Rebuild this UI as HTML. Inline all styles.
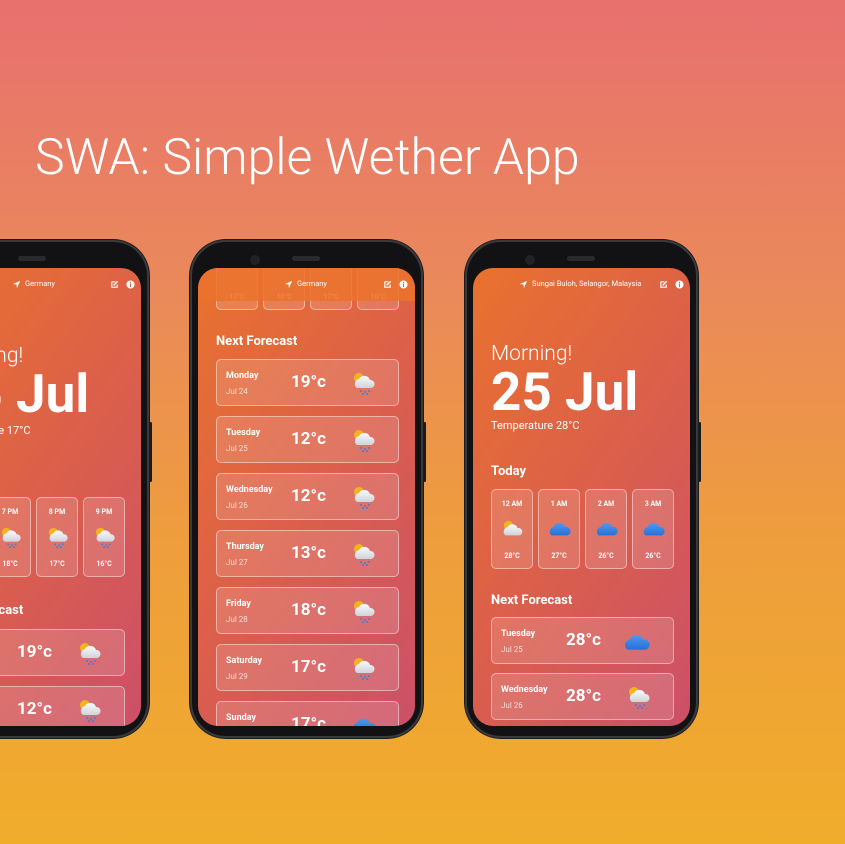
<!DOCTYPE html>
<html style="overflow:hidden"><head><meta charset="utf-8">
<style>
*{margin:0;padding:0;box-sizing:border-box}
body{width:845px;height:844px;overflow:hidden;position:relative;font-family:"Roboto","Liberation Sans",sans-serif;color:#fff;
background:linear-gradient(180deg,#e8706f 0%,#ea8a5a 35%,#ee9e3c 65%,#f0ad2b 100%);}
#wrap{position:absolute;left:0;top:0;width:845px;height:844px;overflow:hidden}
.title{position:absolute;left:35px;top:129px;font-size:50px;font-weight:300;color:#fff;white-space:nowrap}
.phone{position:absolute;top:240px;width:233px;height:498px;border-radius:36px;background:#121214;border:2px solid #3a3a3c;box-shadow:0 0 0 1px #1b1b1b}
.cam{position:absolute;top:13px;left:58px;width:10px;height:10px;border-radius:50%;background:#222}
.spk{position:absolute;top:14px;left:100px;width:28px;height:5px;border-radius:3px;background:#2a2a2c}
.btn{position:absolute;right:-5px;width:3px;background:#1a1a1a;border-radius:2px}
.screen{position:absolute;left:6px;top:26px;width:217px;height:458px;border-radius:20px;overflow:hidden;
background:linear-gradient(125deg,#e9722e 0%,#dd6147 45%,#cc5068 100%)}
.abs{position:absolute;white-space:nowrap}
.hdr{font-size:7.5px;top:11px}
.card{position:absolute;border:1px solid rgba(255,255,255,.45);border-radius:5px;background:rgba(255,255,255,.14)}
.hc{width:42px;height:80px;text-align:center;font-size:7px;font-weight:bold}
.hc .t{position:absolute;top:10px;width:100%}
.hc .b{position:absolute;top:62px;width:100%}
.hc svg{position:absolute;left:9px;top:28px}
.fc{left:18px;width:183px;height:47px}
.fc .d{position:absolute;left:9px;top:11px;font-size:9px;font-weight:bold}
.fc .s{position:absolute;left:9px;top:27px;font-size:8px;opacity:.75}
.fc .tp{position:absolute;left:74px;top:12px;font-size:17px;font-weight:bold}
.fc svg{position:absolute;left:134px;top:11px}
.h2{font-size:13px;font-weight:bold}
.date{font-size:53px;font-weight:bold;line-height:56px}
</style></head><body><div id="wrap">
<svg width="0" height="0" style="position:absolute">
<defs>
<linearGradient id="cg" x1="0" y1="0" x2="0" y2="1"><stop offset="0" stop-color="#fafafa"/><stop offset="1" stop-color="#cfd3da"/></linearGradient>
<linearGradient id="bg" x1="0" y1="0" x2="0" y2="1"><stop offset="0" stop-color="#4a9af0"/><stop offset="1" stop-color="#2a6fd6"/></linearGradient>
<symbol id="rain" viewBox="0 0 26 24"><circle cx="8" cy="7" r="5" fill="#f3b21e"/><path d="M6 17a5 5 0 0 1 2-9 6 6 0 0 1 11 1 4 4 0 0 1 1 8z" fill="url(#cg)"/><circle cx="10" cy="20" r="1" fill="#3b7fe0"/><circle cx="14" cy="21" r="1" fill="#3b7fe0"/><circle cx="18" cy="20" r="1" fill="#3b7fe0"/><circle cx="12" cy="23" r="1" fill="#3b7fe0"/><circle cx="16" cy="23" r="1" fill="#3b7fe0"/></symbol>
<symbol id="sun" viewBox="0 0 26 24"><circle cx="8" cy="8" r="5" fill="#f3b21e"/><path d="M5 19a5 5 0 0 1 2-9 6 6 0 0 1 11 1 4 4 0 0 1 2 8z" fill="url(#cg)"/></symbol>
<symbol id="blue" viewBox="0 0 26 24"><path d="M4 19a5 5 0 0 1 2-9 7 7 0 0 1 13 0 4.5 4.5 0 0 1 2 9z" fill="url(#bg)"/></symbol>
<symbol id="loc" viewBox="0 0 10 10"><path d="M9 1 1 4.5 5 5l.5 4z" fill="#fff"/></symbol>
<symbol id="ed" viewBox="0 0 10 10"><path d="M2 2h4M2 2v6h6V5" stroke="#fff" stroke-width="1.3" fill="none"/><path d="M4 6l4.5-4.5" stroke="#fff" stroke-width="1.5"/></symbol>
<symbol id="inf" viewBox="0 0 10 10"><circle cx="5" cy="5" r="4.5" fill="#fff"/><rect x="4.4" y="4" width="1.2" height="4" fill="#d8603d"/><rect x="4.4" y="2.2" width="1.2" height="1.2" fill="#d8603d"/></symbol>
</defs></svg>

<div class="title">SWA: Simple Wether App</div>

<!-- Left phone -->
<div class="phone" style="left:-84px">
<div class="btn" style="top:180px;height:60px"></div>
<div class="spk"></div>
<div class="screen">
 <svg class="abs" style="left:88px;top:12px" width="9" height="9"><use href="#loc"/></svg>
 <div class="abs hdr" style="left:101px">Germany</div>
 <svg class="abs" style="left:186px;top:12px" width="9" height="9"><use href="#ed"/></svg>
 <svg class="abs" style="left:202px;top:12px" width="9" height="9"><use href="#inf"/></svg>
 <div class="abs" style="left:18px;top:76px;font-size:21px;font-weight:300">Morning!</div>
 <div class="abs date" style="left:18px;top:98px">25 Jul</div>
 <div class="abs" style="left:18px;top:156px;font-size:11px">Temperature 17°C</div>
 <div class="abs h2" style="left:18px;top:203px">Today</div>
 <div class="card hc" style="left:18px;top:229px"><div class="t">6 PM</div><svg width="24" height="22"><use href="#rain"/></svg><div class="b">19°C</div></div>
 <div class="card hc" style="left:65px;top:229px"><div class="t">7 PM</div><svg width="24" height="22"><use href="#rain"/></svg><div class="b">18°C</div></div>
 <div class="card hc" style="left:112px;top:229px"><div class="t">8 PM</div><svg width="24" height="22"><use href="#rain"/></svg><div class="b">17°C</div></div>
 <div class="card hc" style="left:159px;top:229px"><div class="t">9 PM</div><svg width="24" height="22"><use href="#rain"/></svg><div class="b">16°C</div></div>
 <div class="abs h2" style="left:18px;top:335px">Next Forecast</div>
 <div class="card fc" style="top:361px"><div class="d">Monday</div><div class="s">Jul 24</div><div class="tp">19°c</div><svg width="26" height="24"><use href="#rain"/></svg></div>
 <div class="card fc" style="top:418px"><div class="d">Tuesday</div><div class="s">Jul 25</div><div class="tp">12°c</div><svg width="26" height="24"><use href="#rain"/></svg></div>
</div></div>

<!-- Middle phone -->
<div class="phone" style="left:190px">
<div class="btn" style="top:180px;height:60px"></div>
<div class="cam"></div><div class="spk"></div>
<div class="screen">
 <div class="card hc" style="left:18px;top:-38px"><div class="b">17°C</div></div>
 <div class="card hc" style="left:65px;top:-38px"><div class="b">18°C</div></div>
 <div class="card hc" style="left:112px;top:-38px"><div class="b">17°C</div></div>
 <div class="card hc" style="left:159px;top:-38px"><div class="b">16°C</div></div>
 <div class="abs" style="left:0;top:0;width:217px;height:33px;background:rgba(234,114,44,.88)"></div>
 <svg class="abs" style="left:86px;top:12px" width="9" height="9"><use href="#loc"/></svg>
 <div class="abs hdr" style="left:99px">Germany</div>
 <svg class="abs" style="left:185px;top:12px" width="9" height="9"><use href="#ed"/></svg>
 <svg class="abs" style="left:201px;top:12px" width="9" height="9"><use href="#inf"/></svg>
 <div class="abs h2" style="left:18px;top:66px">Next Forecast</div>
 <div class="card fc" style="top:91px"><div class="d">Monday</div><div class="s">Jul 24</div><div class="tp">19°c</div><svg width="26" height="24"><use href="#rain"/></svg></div>
 <div class="card fc" style="top:148px"><div class="d">Tuesday</div><div class="s">Jul 25</div><div class="tp">12°c</div><svg width="26" height="24"><use href="#rain"/></svg></div>
 <div class="card fc" style="top:205px"><div class="d">Wednesday</div><div class="s">Jul 26</div><div class="tp">12°c</div><svg width="26" height="24"><use href="#rain"/></svg></div>
 <div class="card fc" style="top:262px"><div class="d">Thursday</div><div class="s">Jul 27</div><div class="tp">13°c</div><svg width="26" height="24"><use href="#rain"/></svg></div>
 <div class="card fc" style="top:319px"><div class="d">Friday</div><div class="s">Jul 28</div><div class="tp">18°c</div><svg width="26" height="24"><use href="#rain"/></svg></div>
 <div class="card fc" style="top:376px"><div class="d">Saturday</div><div class="s">Jul 29</div><div class="tp">17°c</div><svg width="26" height="24"><use href="#rain"/></svg></div>
 <div class="card fc" style="top:433px"><div class="d">Sunday</div><div class="s">Jul 30</div><div class="tp">17°c</div><svg width="26" height="24"><use href="#blue"/></svg></div>
</div></div>

<!-- Right phone -->
<div class="phone" style="left:465px">
<div class="btn" style="top:180px;height:60px"></div>
<div class="cam"></div><div class="spk"></div>
<div class="screen">
 <svg class="abs" style="left:46px;top:12px" width="9" height="9"><use href="#loc"/></svg>
 <div class="abs hdr" style="left:59px">Sungai Buloh, Selangor, Malaysia</div>
 <svg class="abs" style="left:186px;top:12px" width="9" height="9"><use href="#ed"/></svg>
 <svg class="abs" style="left:202px;top:12px" width="9" height="9"><use href="#inf"/></svg>
 <div class="abs" style="left:18px;top:74px;font-size:21px;font-weight:300">Morning!</div>
 <div class="abs date" style="left:18px;top:96px">25 Jul</div>
 <div class="abs" style="left:18px;top:151px;font-size:11px">Temperature 28°C</div>
 <div class="abs h2" style="left:18px;top:196px">Today</div>
 <div class="card hc" style="left:18px;top:221px"><div class="t">12 AM</div><svg width="24" height="22"><use href="#sun"/></svg><div class="b">28°C</div></div>
 <div class="card hc" style="left:65px;top:221px"><div class="t">1 AM</div><svg width="24" height="22"><use href="#blue"/></svg><div class="b">27°C</div></div>
 <div class="card hc" style="left:112px;top:221px"><div class="t">2 AM</div><svg width="24" height="22"><use href="#blue"/></svg><div class="b">26°C</div></div>
 <div class="card hc" style="left:159px;top:221px"><div class="t">3 AM</div><svg width="24" height="22"><use href="#blue"/></svg><div class="b">26°C</div></div>
 <div class="abs h2" style="left:18px;top:325px">Next Forecast</div>
 <div class="card fc" style="top:349px"><div class="d">Tuesday</div><div class="s">Jul 25</div><div class="tp">28°c</div><svg width="30" height="26" style="left:130px"><use href="#blue"/></svg></div>
 <div class="card fc" style="top:405px"><div class="d">Wednesday</div><div class="s">Jul 26</div><div class="tp">28°c</div><svg width="26" height="24"><use href="#rain"/></svg></div>
</div></div>
</div></body></html>
